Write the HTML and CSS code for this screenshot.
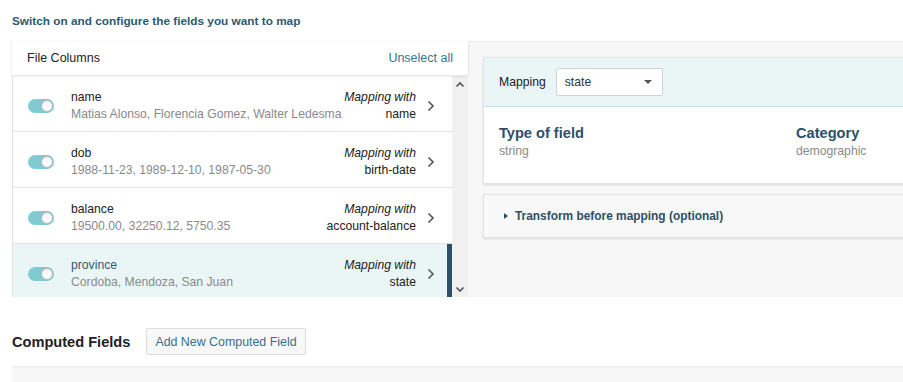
FILE: index.html
```html
<!DOCTYPE html>
<html lang="en">
<head>
    <meta charset="UTF-8">
    <meta name="viewport" content="width=device-width, initial-scale=1.0">
    <link rel="stylesheet" href="styles.css">
    <title>Field mapping</title>
</head>
<body>
    <div class="page">
        <h1 class="page-title">Switch on and configure the fields you want to map</h1>

        <section class="mapper">
            <!-- File columns list -->
            <div class="columns">
                <div class="columns-header">
                    <span>File Columns</span>
                    <a href="#" class="link">Unselect all</a>
                </div>
                <div class="columns-body">
                    <ul class="column-list">
                        <li class="column-row">
                            <span class="toggle"></span>
                            <div class="column-info">
                                <div class="column-name">name</div>
                                <div class="column-sample">Matias Alonso, Florencia Gomez, Walter Ledesma</div>
                            </div>
                            <div class="column-map">
                                <em>Mapping with</em>
                                <span>name</span>
                            </div>
                            <svg class="chevron" width="8" height="12" viewBox="0 0 8 12"><polyline points="1.5,1.5 6,6 1.5,10.5" fill="none" stroke="#555" stroke-width="1.6"/></svg>
                        </li>
                        <li class="column-row">
                            <span class="toggle"></span>
                            <div class="column-info">
                                <div class="column-name">dob</div>
                                <div class="column-sample">1988-11-23, 1989-12-10, 1987-05-30</div>
                            </div>
                            <div class="column-map">
                                <em>Mapping with</em>
                                <span>birth-date</span>
                            </div>
                            <svg class="chevron" width="8" height="12" viewBox="0 0 8 12"><polyline points="1.5,1.5 6,6 1.5,10.5" fill="none" stroke="#555" stroke-width="1.6"/></svg>
                        </li>
                        <li class="column-row">
                            <span class="toggle"></span>
                            <div class="column-info">
                                <div class="column-name">balance</div>
                                <div class="column-sample">19500.00, 32250.12, 5750.35</div>
                            </div>
                            <div class="column-map">
                                <em>Mapping with</em>
                                <span>account-balance</span>
                            </div>
                            <svg class="chevron" width="8" height="12" viewBox="0 0 8 12"><polyline points="1.5,1.5 6,6 1.5,10.5" fill="none" stroke="#555" stroke-width="1.6"/></svg>
                        </li>
                        <li class="column-row selected">
                            <span class="toggle"></span>
                            <div class="column-info">
                                <div class="column-name">province</div>
                                <div class="column-sample">Cordoba, Mendoza, San Juan</div>
                            </div>
                            <div class="column-map">
                                <em>Mapping with</em>
                                <span>state</span>
                            </div>
                            <svg class="chevron" width="8" height="12" viewBox="0 0 8 12"><polyline points="1.5,1.5 6,6 1.5,10.5" fill="none" stroke="#555" stroke-width="1.6"/></svg>
                        </li>
                    </ul>
                    <div class="scrollbar">
                        <svg width="10" height="7" viewBox="0 0 10 7"><polyline points="1.5,5.5 5,2 8.5,5.5" fill="none" stroke="#555" stroke-width="1.6"/></svg>
                        <svg width="10" height="7" viewBox="0 0 10 7"><polyline points="1.5,1.5 5,5 8.5,1.5" fill="none" stroke="#555" stroke-width="1.6"/></svg>
                    </div>
                </div>
            </div>

            <!-- Detail of the selected column -->
            <div class="detail">
                <div class="card">
                    <div class="card-head">
                        <label>Mapping</label>
                        <div class="select">
                            <span>state</span>
                            <span class="caret"></span>
                        </div>
                    </div>
                    <div class="card-body">
                        <div>
                            <div class="prop-title">Type of field</div>
                            <div class="prop-value">string</div>
                        </div>
                        <div>
                            <div class="prop-title">Category</div>
                            <div class="prop-value">demographic</div>
                        </div>
                    </div>
                </div>
                <div class="card transform">
                    <span class="triangle"></span>
                    Transform before mapping (optional)
                </div>
            </div>
        </section>

        <div class="computed-head">
            <h2>Computed Fields</h2>
            <button type="button" class="btn">Add New Computed Field</button>
        </div>
        <div class="computed-box"></div>
    </div>
</body>
</html>
```

FILE: styles.css
```css
body {
    margin: 0;
    font-family: "Liberation Sans", Arial, sans-serif;
    font-size: 12.2px;
    color: #222;
    background-color: #fff;
    overflow: hidden;
}

.page {
    width: 891px;
    padding: 0 0 0 12px;
    overflow: hidden;
}

.page-title {
    margin: 14px 0 13px;
    font-size: 11.8px;
    line-height: 14px;
    font-weight: bold;
    color: #2b5a72;
}

.mapper {
    display: flex;
    height: 256px;
}

/* left list */
.columns {
    width: 456px;
    display: flex;
    flex-direction: column;
    flex-shrink: 0;
}

.columns-header {
    height: 34px;
    display: flex;
    align-items: center;
    justify-content: space-between;
    padding: 0 15px;
    font-size: 12.5px;
    background-color: #fff;
    box-shadow: 0 1px 3px rgba(0, 0, 0, 0.14);
    position: relative;
    z-index: 1;
}

.link {
    color: #3a7592;
    text-decoration: none;
}

.columns-body {
    flex: 1;
    display: flex;
    overflow: hidden;
    margin-top: 1px;
}

.column-list {
    flex: 1;
    list-style: none;
    margin: 0;
    padding: 0;
    border-left: 1px solid #e2e2e2;
    background-color: #fff;
}

.column-row {
    box-sizing: border-box;
    height: 56px;
    display: flex;
    align-items: center;
    padding: 4px 17px 0 15px;
    border-bottom: 1px solid #e3e3e3;
    line-height: 17px;
}

.column-row.selected {
    background-color: #eaf6f6;
    border-right: 5px solid #2d5068;
    padding-right: 12px;
}

.toggle {
    width: 26px;
    height: 14px;
    border-radius: 7px;
    background-color: #7fcbd1;
    position: relative;
    flex-shrink: 0;
}

.toggle::after {
    content: "";
    position: absolute;
    right: 1px;
    top: 1px;
    width: 10px;
    height: 10px;
    border-radius: 50%;
    background-color: #fafafa;
    border: 1px solid #b5b5b5;
}

.column-info {
    flex: 1;
    margin-left: 17px;
    white-space: nowrap;
}

.selected .column-name {
    color: #2d5a78;
}

.column-sample {
    color: #8a8a8a;
}

.column-map {
    display: flex;
    flex-direction: column;
    align-items: flex-end;
    margin-right: 11px;
    white-space: nowrap;
}

.chevron {
    flex-shrink: 0;
}

.scrollbar {
    width: 16px;
    background-color: #f0f0f0;
    display: flex;
    flex-direction: column;
    justify-content: space-between;
    align-items: center;
    padding: 5px 0 4px;
}

/* right detail */
.detail {
    flex: 1;
    min-width: 0;
    overflow: hidden;
    background-color: #f7f7f7;
    border-top: 1px solid #ececec;
    padding: 15px 0 0 15px;
}

.card {
    width: 640px;
    background-color: #fff;
    border: 1px solid #e4e4e4;
    box-shadow: 0 1px 2px rgba(0, 0, 0, 0.12);
}

.card-head {
    height: 48px;
    display: flex;
    align-items: center;
    padding: 0 15px;
    background-color: #eaf6f6;
    border-bottom: 1px solid #bfe2e5;
}

.card-head label {
    margin-right: 10px;
}

.select {
    width: 89px;
    height: 26px;
    padding: 0 8px;
    display: flex;
    align-items: center;
    justify-content: space-between;
    background-color: #fff;
    border: 1px solid #d2d2d2;
    border-radius: 2px;
    color: #333;
}

.caret {
    border-left: 4px solid transparent;
    border-right: 4px solid transparent;
    border-top: 4px solid #555;
    margin-right: 2px;
}

.card-body {
    display: grid;
    grid-template-columns: 297px 1fr;
    padding: 17px 15px 23px;
}

.prop-title {
    font-size: 14.6px;
    font-weight: bold;
    color: #2d5068;
    line-height: 18px;
}

.prop-value {
    color: #8a8a8a;
    line-height: 17px;
    margin-top: 1px;
}

.card.transform {
    margin-top: 10px;
    height: 42px;
    display: flex;
    align-items: center;
    padding-left: 20px;
    background-color: #f8f8f8;
    font-size: 11.9px;
    font-weight: bold;
    color: #2d5068;
}

.triangle {
    border-top: 3.5px solid transparent;
    border-bottom: 3.5px solid transparent;
    border-left: 4px solid #2d5068;
    margin-right: 7px;
}

/* computed fields */
.computed-head {
    display: flex;
    align-items: center;
    margin-top: 31px;
    height: 27px;
}

.computed-head h2 {
    margin: 0 16px 0 0;
    font-size: 14.6px;
    color: #222;
}

.btn {
    height: 27px;
    padding: 0 8px;
    font-family: inherit;
    font-size: 12.4px;
    color: #3a6f8c;
    background-color: #f8f8f8;
    border: 1px solid #dcdcdc;
    border-radius: 2px;
}

.computed-box {
    margin-top: 11px;
    height: 16px;
    background-color: #f7f7f7;
    border-top: 1px solid #ececec;
}
```
